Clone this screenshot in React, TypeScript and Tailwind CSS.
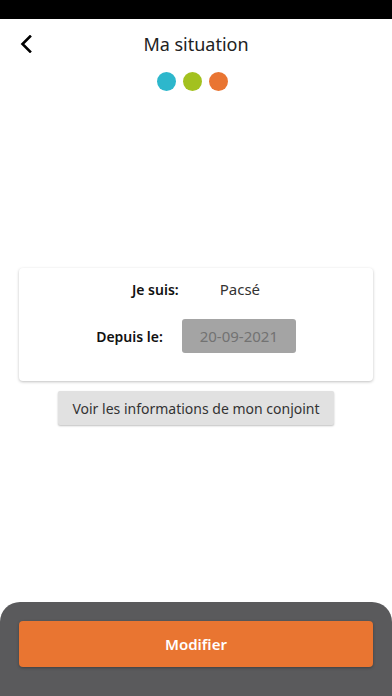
import React from 'react';

const App: React.FC = () => {
    return (
        <div
            className="relative flex h-[696px] w-full flex-col overflow-hidden bg-white"
            style={{ fontFamily: '"Noto Sans", "Open Sans", sans-serif' }}
        >
            {/* Barre de statut */}
            <div className="h-[19px] w-full bg-black" />

            {/* En-tête */}
            <div className="relative flex h-[50px] items-center justify-center">
                <button className="absolute left-[15px] top-1/2 -translate-y-1/2 p-1" aria-label="Retour">
                    <svg width="14" height="18" viewBox="0 0 14 18" fill="none">
                        <path d="M11 1.5 L3.5 9 L11 16.5" stroke="#000" strokeWidth="2.6" strokeLinecap="square" />
                    </svg>
                </button>
                <h1 className="text-[18px] text-[#222]">Ma situation</h1>
            </div>

            {/* Étapes */}
            <div className="mt-[3px] flex justify-center gap-[7px] pr-[8px]">
                <span className="h-[19px] w-[19px] rounded-full bg-[#2db7cc]" />
                <span className="h-[19px] w-[19px] rounded-full bg-[#a3c11f]" />
                <span className="h-[19px] w-[19px] rounded-full bg-[#e97532]" />
            </div>

            {/* Carte situation */}
            <div className="mx-[19px] mt-[177px] rounded-[4px] bg-white px-4 pb-[28px] pt-[4px] shadow-[0_1px_3px_rgba(0,0,0,0.25)]">
                <div className="flex h-[34px] items-center justify-center gap-[41px] text-[14px]">
                    <span className="font-semibold text-[#111]">Je suis:</span>
                    <span className="text-[15px] text-[#333]">Pacsé</span>
                </div>
                <div className="mt-[13px] flex h-[34px] items-center justify-center gap-[19px] text-[14px]">
                    <span className="font-semibold text-[#111]">Depuis le:</span>
                    <div className="flex h-[34px] w-[114px] items-center justify-center rounded-[3px] bg-[#a4a4a4] text-[15px] text-[#727272]">
                        20-09-2021
                    </div>
                </div>
            </div>

            {/* Bouton conjoint */}
            <div className="mt-[10px] flex justify-center">
                <button className="h-[34px] w-[276px] rounded-[2px] bg-[#e1e1e1] text-[14px] text-[#333] shadow-[0_1px_2px_rgba(0,0,0,0.25)]">
                    Voir les informations de mon conjoint
                </button>
            </div>

            {/* Panneau du bas */}
            <div className="mt-auto h-[94px] rounded-t-[20px] bg-[#5a5a5c] px-[19px] pt-[19px]">
                <button className="h-[46px] w-full rounded-[4px] bg-[#e97531] text-[15px] font-semibold text-white shadow-[0_1px_3px_rgba(0,0,0,0.3)]">
                    Modifier
                </button>
            </div>
        </div>
    );
};

export default App;
